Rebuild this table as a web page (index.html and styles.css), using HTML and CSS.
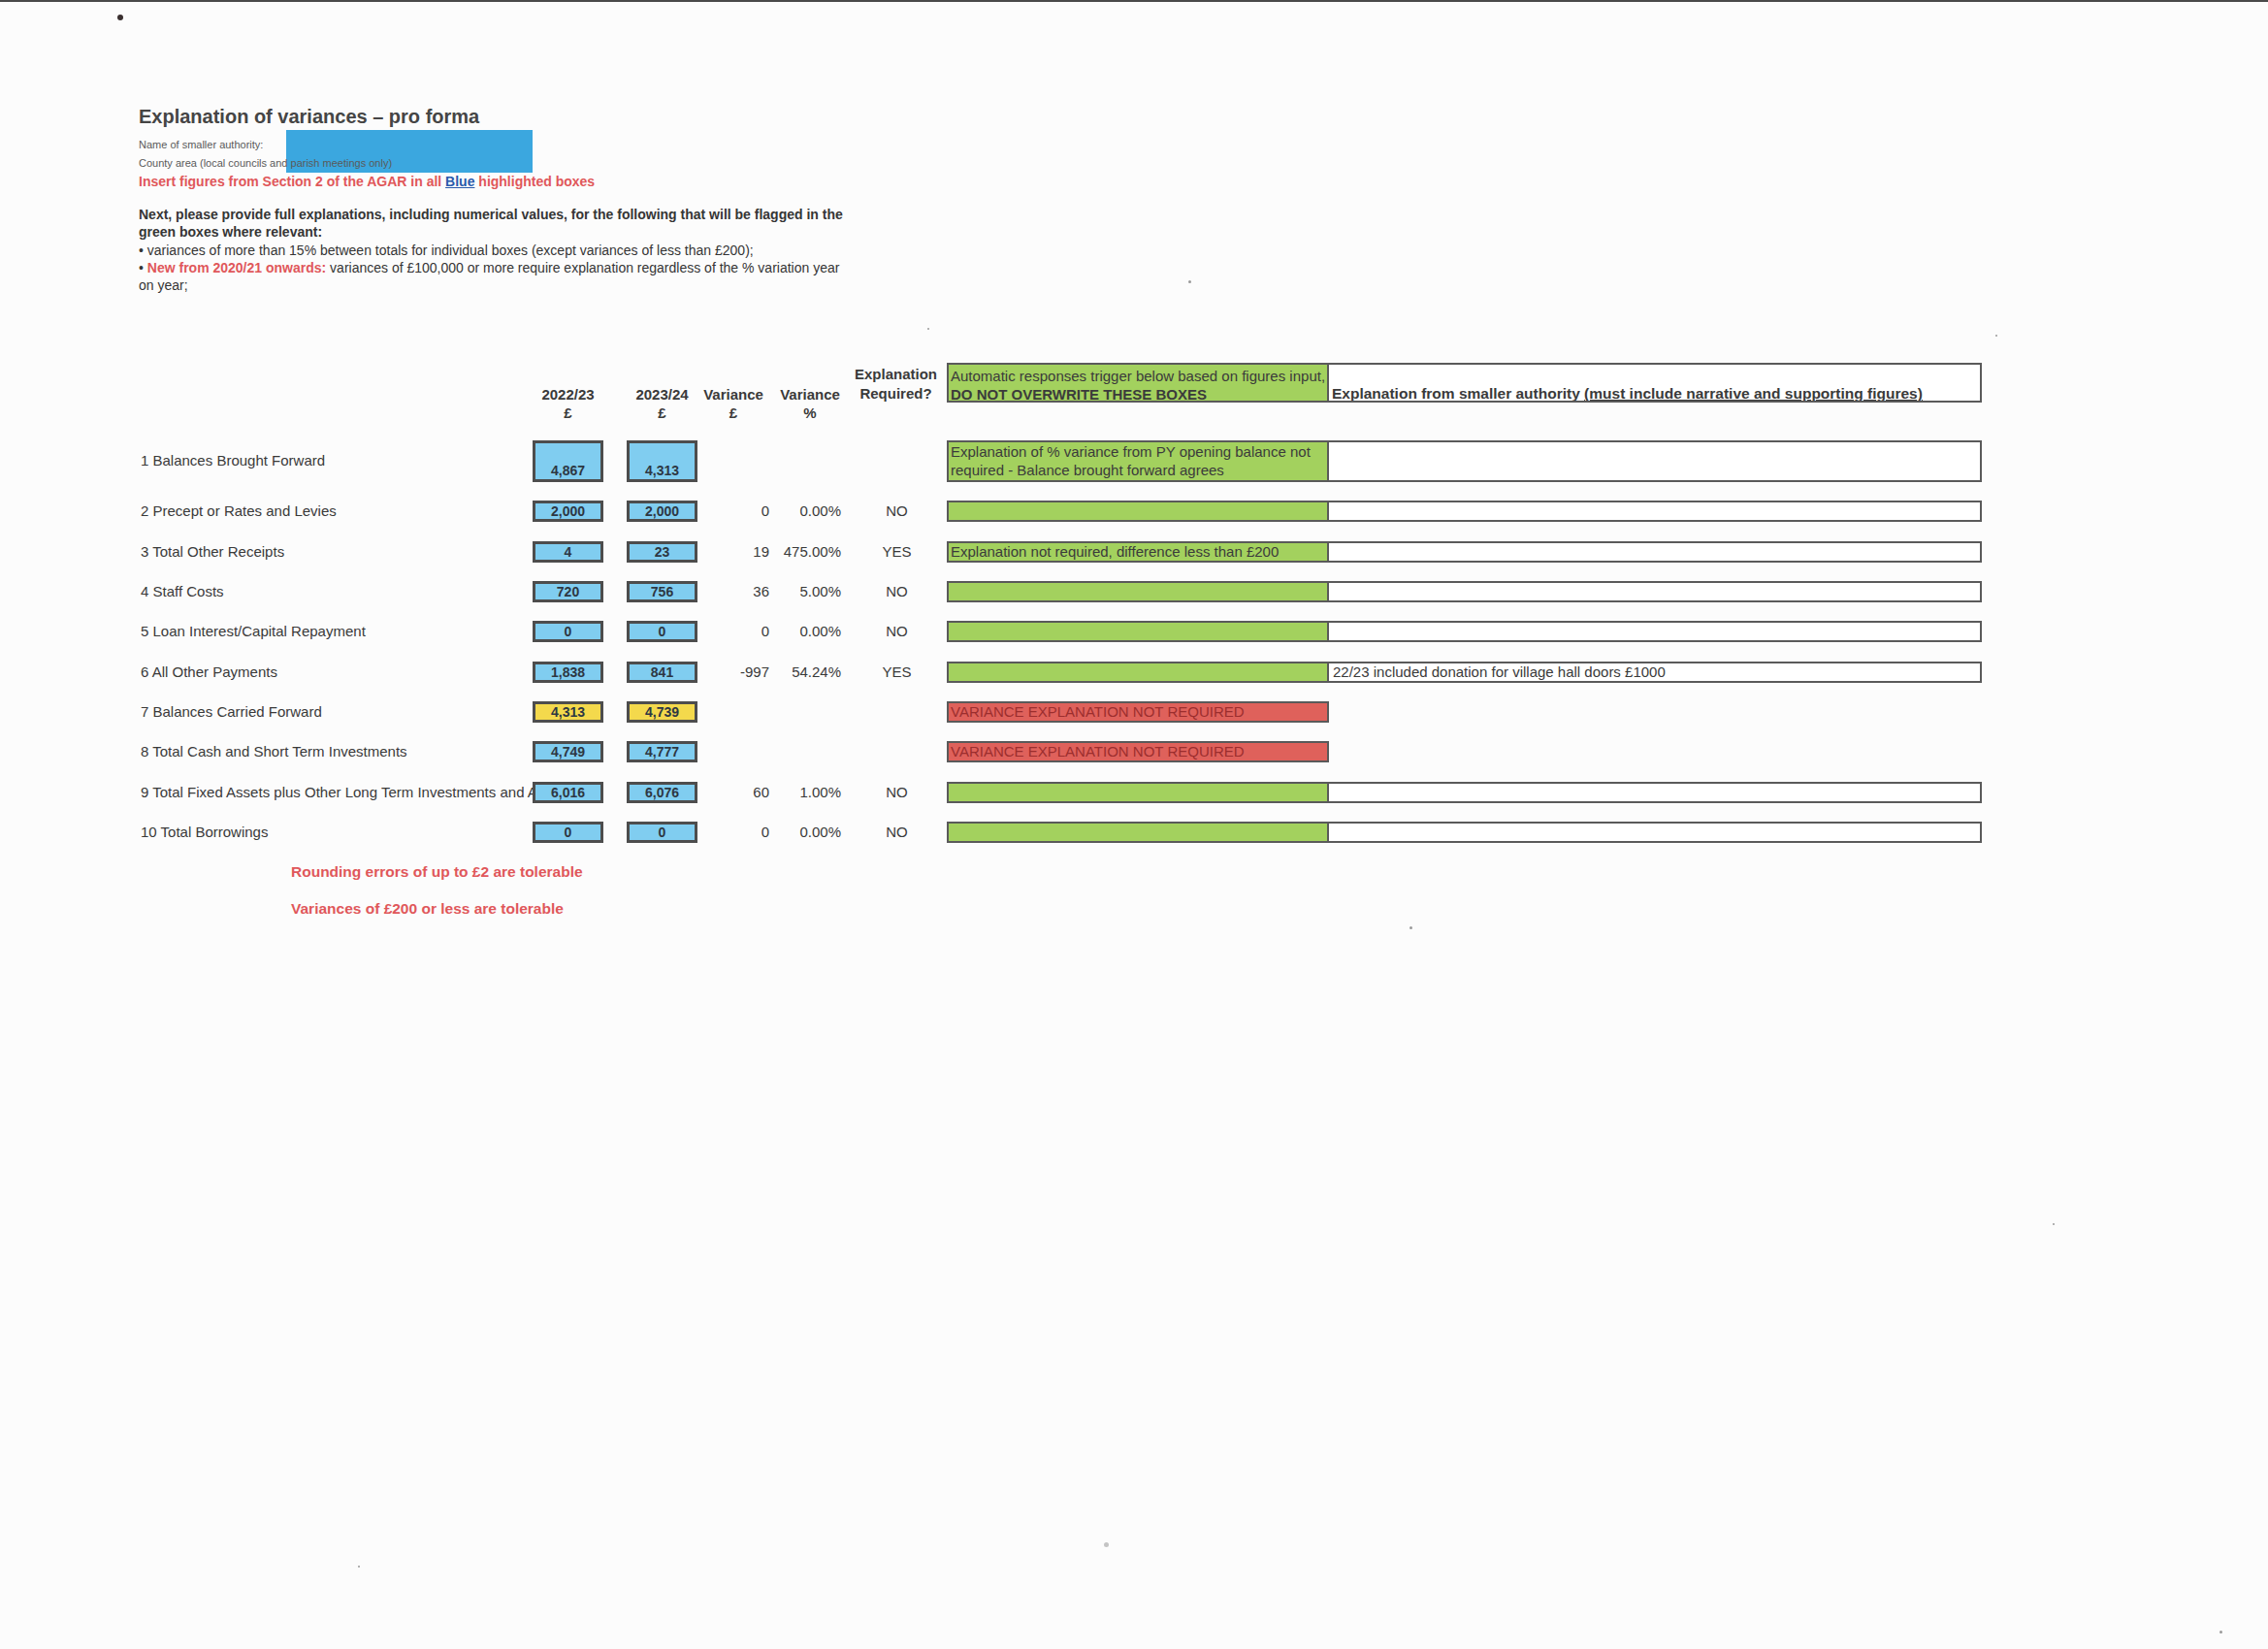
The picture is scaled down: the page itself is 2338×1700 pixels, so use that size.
FILE: index.html
```html
<!DOCTYPE html>
<html lang="en">
<head>
<meta charset="utf-8">
<title>Explanation of variances – pro forma</title>
<link rel="stylesheet" href="styles.css">
</head>
<body>
<div class="page">
  <span class="speck sp1"></span>
  <span class="speck sp2"></span>
  <span class="speck sp3"></span>
  <span class="speck sp4"></span>
  <span class="speck sp5"></span>
  <span class="speck sp6"></span>
  <span class="speck sp7"></span>
  <span class="speck sp8"></span>
  <span class="speck sp9"></span>
  <div class="redact"></div>

  <h1 class="title">Explanation of variances – pro forma</h1>
  <div class="meta">Name of smaller authority:</div>
  <div class="meta">County area (local councils and parish meetings only)</div>
  <div class="insert">Insert figures from Section 2 of the AGAR in all <span class="blue-word">Blue</span> highlighted boxes</div>

  <div class="intro">
    <div class="strong">Next, please provide full explanations, including numerical values, for the following that will be flagged in the</div>
    <div class="strong">green boxes where relevant:</div>
    <div>• variances of more than 15% between totals for individual boxes (except variances of less than £200);</div>
    <div>• <span class="red-strong">New from 2020/21 onwards:</span> variances of £100,000 or more require explanation regardless of the % variation year</div>
    <div>on year;</div>
  </div>

  <div class="table">
    <div class="row head">
      <div class="label"></div>
      <div class="hcell year">2022/23<br>£</div>
      <div class="hcell year second-col">2023/24<br>£</div>
      <div class="hcell var">Variance<br>£</div>
      <div class="hcell var pct">Variance<br>%</div>
      <div class="hcell reqh">Explanation<br>Required?</div>
      <div class="auto green headbox">Automatic responses trigger below based on figures input,<br><b>DO NOT OVERWRITE THESE BOXES</b></div>
      <div class="expl headexpl"><b>Explanation from smaller authority <u>(must include narrative and supporting figures)</u></b></div>
    </div>

    <div class="row tall">
      <div class="label">1 Balances Brought Forward</div>
      <div class="box blue bottom">4,867</div>
      <div class="box blue bottom second">4,313</div>
      <div class="num"></div>
      <div class="num"></div>
      <div class="req"></div>
      <div class="auto green">Explanation of % variance from PY opening balance not<br>required - Balance brought forward agrees</div>
      <div class="expl"></div>
    </div>

    <div class="row">
      <div class="label">2 Precept or Rates and Levies</div>
      <div class="box blue">2,000</div>
      <div class="box blue second">2,000</div>
      <div class="num">0</div>
      <div class="num">0.00%</div>
      <div class="req">NO</div>
      <div class="auto green"></div>
      <div class="expl"></div>
    </div>

    <div class="row">
      <div class="label">3 Total Other Receipts</div>
      <div class="box blue">4</div>
      <div class="box blue second">23</div>
      <div class="num">19</div>
      <div class="num">475.00%</div>
      <div class="req">YES</div>
      <div class="auto green">Explanation not required, difference less than £200</div>
      <div class="expl"></div>
    </div>

    <div class="row">
      <div class="label">4 Staff Costs</div>
      <div class="box blue">720</div>
      <div class="box blue second">756</div>
      <div class="num">36</div>
      <div class="num">5.00%</div>
      <div class="req">NO</div>
      <div class="auto green"></div>
      <div class="expl"></div>
    </div>

    <div class="row">
      <div class="label">5 Loan Interest/Capital Repayment</div>
      <div class="box blue">0</div>
      <div class="box blue second">0</div>
      <div class="num">0</div>
      <div class="num">0.00%</div>
      <div class="req">NO</div>
      <div class="auto green"></div>
      <div class="expl"></div>
    </div>

    <div class="row">
      <div class="label">6 All Other Payments</div>
      <div class="box blue">1,838</div>
      <div class="box blue second">841</div>
      <div class="num">-997</div>
      <div class="num">54.24%</div>
      <div class="req">YES</div>
      <div class="auto green"></div>
      <div class="expl">22/23 included donation for village hall doors £1000</div>
    </div>

    <div class="row">
      <div class="label">7 Balances Carried Forward</div>
      <div class="box yellow">4,313</div>
      <div class="box yellow second">4,739</div>
      <div class="num"></div>
      <div class="num"></div>
      <div class="req"></div>
      <div class="auto red">VARIANCE EXPLANATION NOT REQUIRED</div>
      <div class="none"></div>
    </div>

    <div class="row">
      <div class="label">8 Total Cash and Short Term Investments</div>
      <div class="box blue">4,749</div>
      <div class="box blue second">4,777</div>
      <div class="num"></div>
      <div class="num"></div>
      <div class="req"></div>
      <div class="auto red">VARIANCE EXPLANATION NOT REQUIRED</div>
      <div class="none"></div>
    </div>

    <div class="row">
      <div class="label">9 Total Fixed Assets plus Other Long Term Investments and Assets</div>
      <div class="box blue">6,016</div>
      <div class="box blue second">6,076</div>
      <div class="num">60</div>
      <div class="num">1.00%</div>
      <div class="req">NO</div>
      <div class="auto green"></div>
      <div class="expl"></div>
    </div>

    <div class="row">
      <div class="label">10 Total Borrowings</div>
      <div class="box blue">0</div>
      <div class="box blue second">0</div>
      <div class="num">0</div>
      <div class="num">0.00%</div>
      <div class="req">NO</div>
      <div class="auto green"></div>
      <div class="expl"></div>
    </div>
  </div>

  <div class="notes">
    <div class="note">Rounding errors of up to £2 are tolerable</div>
    <div class="note">Variances of £200 or less are tolerable</div>
  </div>
</div>
</body>
</html>
```

FILE: styles.css
```css
html, body {
  margin: 0;
  padding: 0;
  background: #fcfcfc;
}

body {
  font-family: "Liberation Sans", Arial, sans-serif;
  color: #3a3a3a;
}

.page {
  position: relative;
  box-sizing: border-box;
  width: 2338px;
  height: 1700px;
  border-top: 2px solid #4a4a4a;
  padding-left: 143px;
  overflow: hidden;
}

/* scan specks */
.speck {
  position: absolute;
  width: 3px;
  height: 3px;
  border-radius: 50%;
  background: #9a9a9a;
}
.sp1 { left: 121px; top: 13px; width: 6px; height: 6px; background: #3a3030; }
.sp2 { left: 1225px; top: 287px; }
.sp3 { left: 956px; top: 336px; width: 2px; height: 2px; }
.sp4 { left: 2057px; top: 343px; width: 2px; height: 2px; }
.sp5 { left: 1453px; top: 953px; }
.sp6 { left: 2116px; top: 1259px; width: 2px; height: 2px; }
.sp7 { left: 1138px; top: 1588px; width: 5px; height: 5px; background: #c4c4c4; }
.sp8 { left: 2288px; top: 1679px; }
.sp9 { left: 369px; top: 1612px; width: 2px; height: 2px; }

/* redaction box over the authority name */
.redact {
  position: absolute;
  left: 295px;
  top: 132px;
  width: 254px;
  height: 44px;
  background: #3ba7df;
}

.title {
  position: relative;
  margin: 107px 0 0 0;
  font-size: 20px;
  line-height: 22px;
  font-weight: bold;
  color: #454545;
}

.meta {
  position: relative;
  font-size: 11px;
  line-height: 19px;
  color: #5a5a5a;
}
.title + .meta {
  margin-top: 9px;
}

.insert {
  position: relative;
  font-size: 14px;
  line-height: 19px;
  font-weight: bold;
  color: #e0575a;
}
.blue-word {
  color: #2a5aab;
  text-decoration: underline;
}

.intro {
  margin-top: 15px;
  font-size: 14px;
  line-height: 18.3px;
  color: #353535;
  white-space: nowrap;
}
.strong {
  font-weight: bold;
}
.red-strong {
  font-weight: bold;
  color: #e0575a;
}

/* ---------- table ---------- */
.table {
  margin-top: 71px;
}

.row {
  display: grid;
  grid-template-columns: 406px 73px 97px 74px 74px 109px 394px 673px;
  height: 22px;
  margin-bottom: 19.375px;
  font-size: 15px;
  color: #3a3a3a;
}
.row.head {
  height: 60px;
}
.row.tall {
  height: 43px;
}

.label {
  align-self: center;
  padding-left: 2px;
  white-space: nowrap;
  overflow: hidden;
  line-height: 18px;
}

.hcell {
  font-weight: bold;
  text-align: center;
  line-height: 19px;
  color: #3a3a3a;
}
.year, .var {
  padding-top: 23px;
}
.second-col {
  padding-left: 24px;
}
.pct {
  padding-left: 10px;
}
.reqh {
  padding-top: 2px;
  padding-left: 4px;
  line-height: 20px;
}

.box {
  box-sizing: border-box;
  border: 3px solid #4d4d4d;
  display: flex;
  align-items: center;
  justify-content: center;
  font-size: 14px;
  font-weight: bold;
  line-height: 16px;
  color: #2d3743;
}
.box.bottom {
  align-items: flex-end;
  padding-bottom: 1px;
}
.second {
  margin-left: 24px;
}
.blue {
  background: #80cdf0;
}
.yellow {
  background: #f4d94c;
}

.num {
  align-self: center;
  text-align: right;
  line-height: 18px;
}
.req {
  align-self: center;
  text-align: center;
  padding-left: 6px;
  line-height: 18px;
}

.auto {
  box-sizing: border-box;
  border: 2px solid #5a5a5a;
  padding-left: 2px;
  font-size: 15px;
  line-height: 18px;
  white-space: nowrap;
  overflow: hidden;
  color: #3b3b3b;
}
.green {
  background: #a3d15e;
}
.red {
  background: #df615b;
  color: #9c2e2e;
}
.tall .auto {
  line-height: 19px;
}
.headbox {
  height: 41px;
  padding-top: 1.5px;
  line-height: 19px;
}

.expl {
  box-sizing: border-box;
  border: 2px solid #5a5a5a;
  border-left: 0;
  background: #fff;
  padding-left: 4px;
  line-height: 18px;
  white-space: nowrap;
  overflow: hidden;
  color: #3a3a3a;
}
.headexpl {
  height: 41px;
  padding-top: 21px;
  font-size: 15.5px;
  line-height: 17px;
  padding-left: 3px;
}
.none {
  background: transparent;
}

.notes {
  padding-left: 157px;
  margin-top: 0;
}
.note {
  font-size: 15.5px;
  line-height: 20px;
  font-weight: bold;
  color: #e0575a;
}
.note + .note {
  margin-top: 18px;
}
```
